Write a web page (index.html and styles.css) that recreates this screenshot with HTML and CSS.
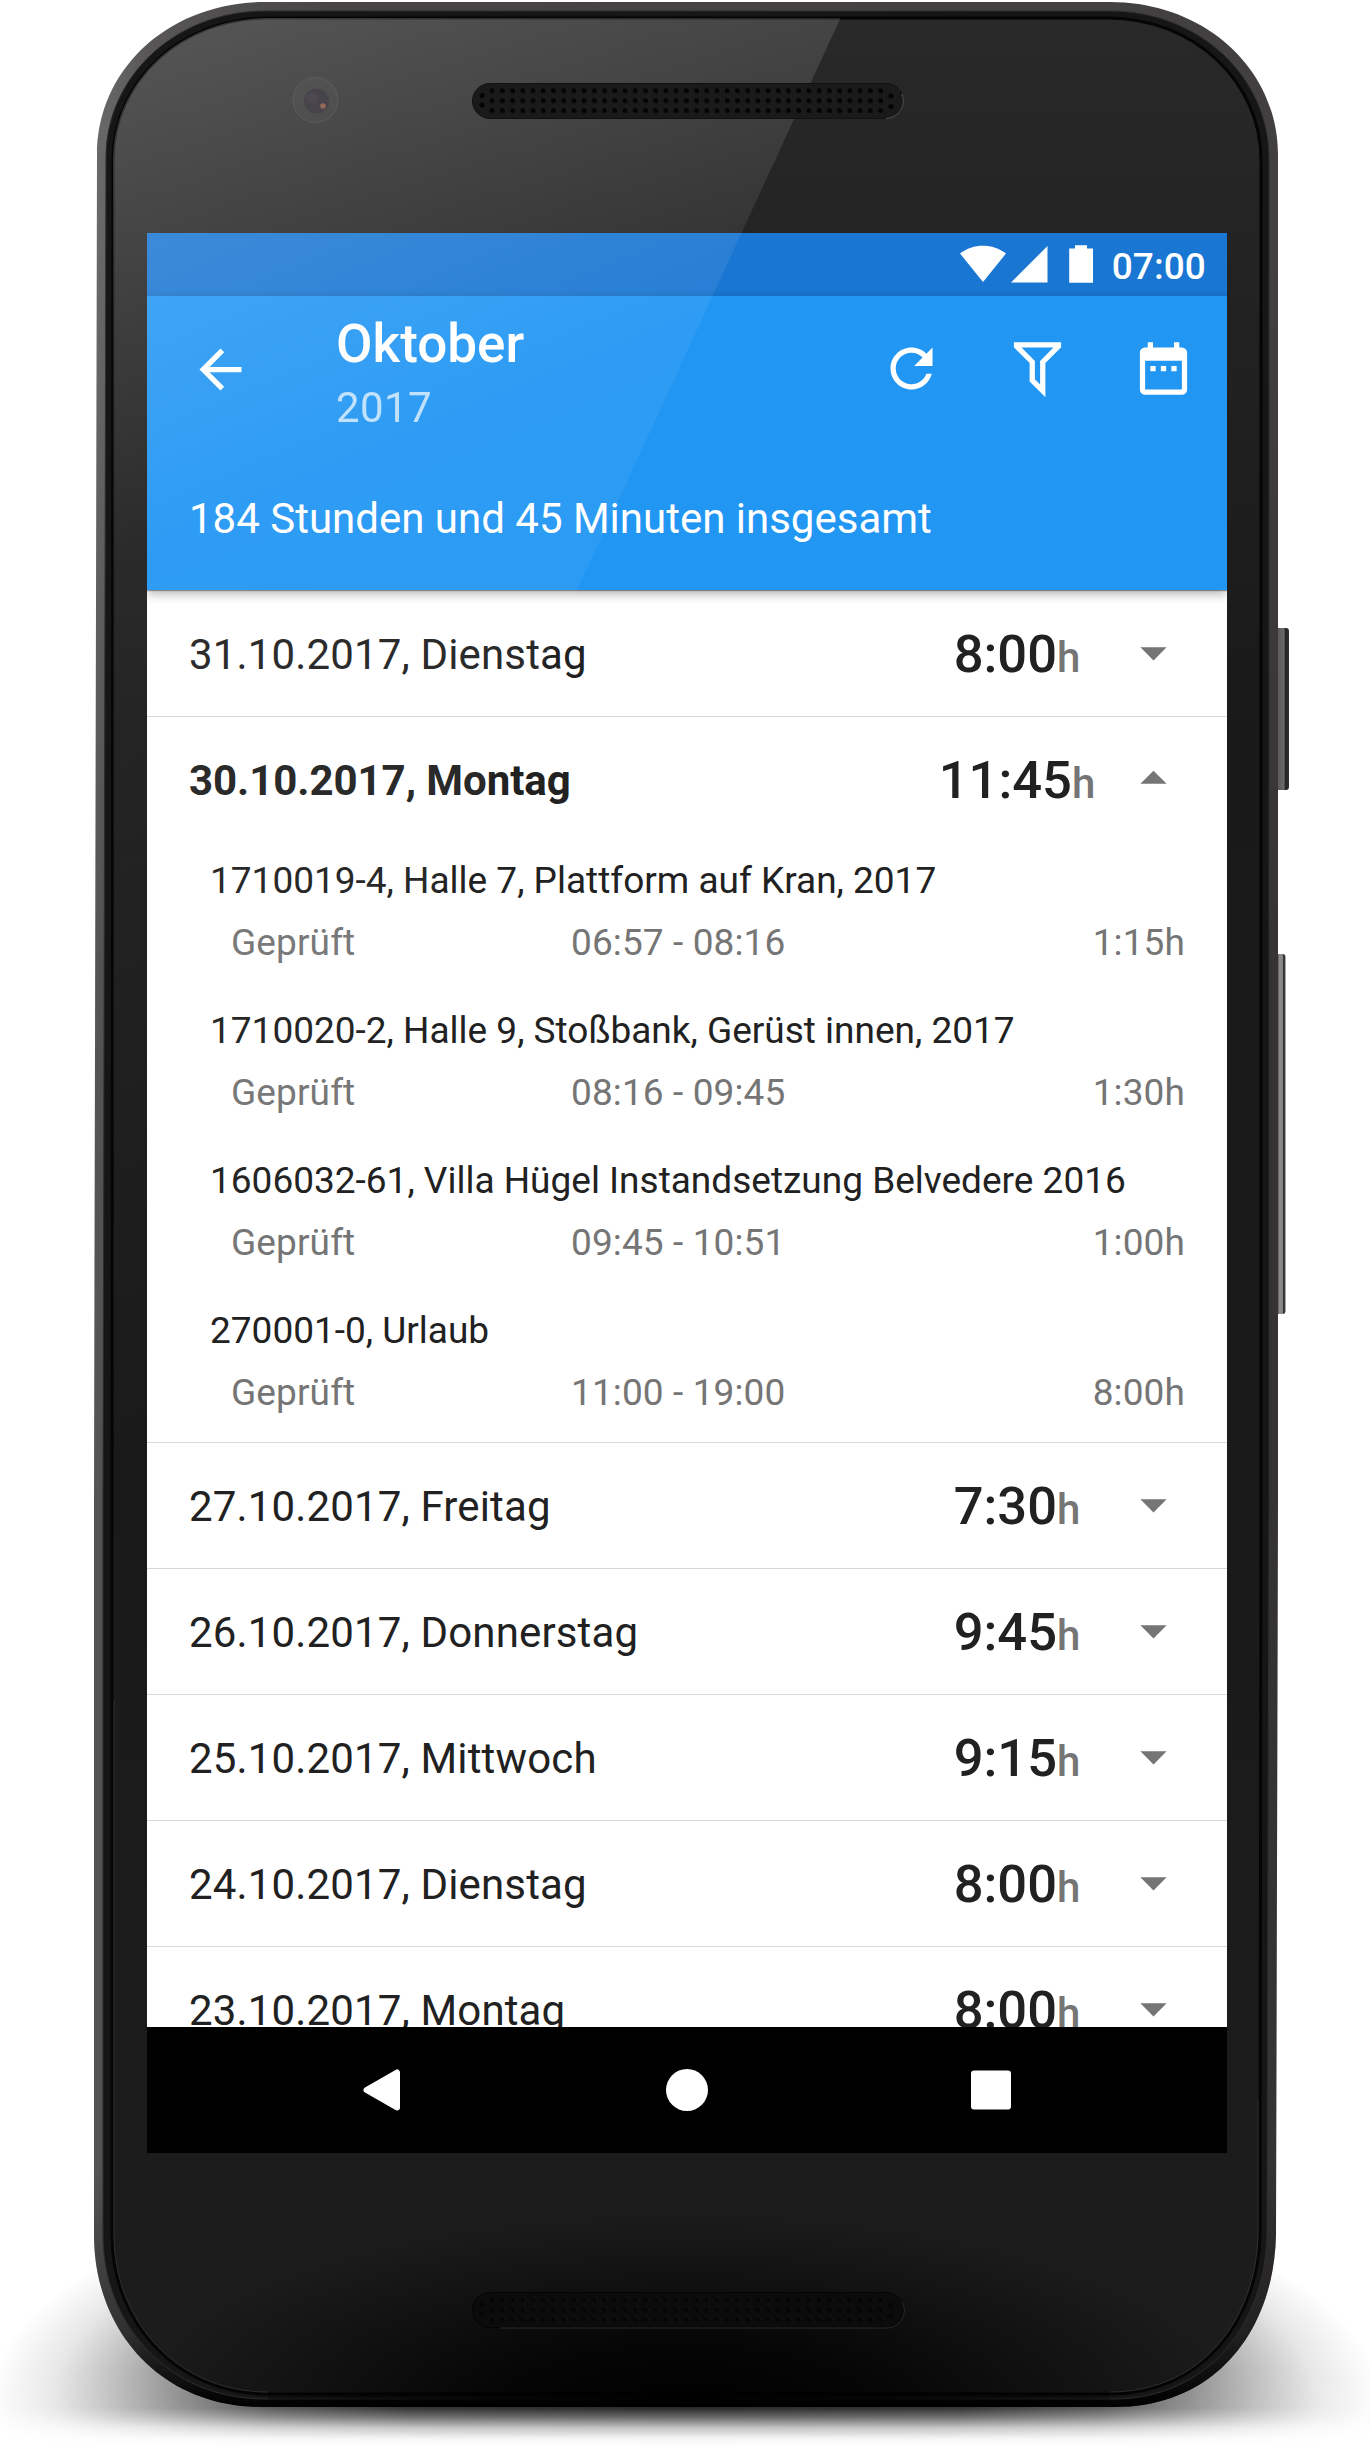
FILE: index.html
```html
<!DOCTYPE html>
<html lang="de">
<head>
<meta charset="utf-8">
<title>Oktober 2017</title>
<link rel="stylesheet" href="styles.css">
</head>
<body>
<div class="phone">
  <svg class="layer" viewBox="0 0 1370 2446" aria-hidden="true">
    <defs>
      <radialGradient id="floor" gradientUnits="userSpaceOnUse" cx="0" cy="0" r="1" gradientTransform="translate(685 2400) scale(695 250)">
        <stop offset="0" stop-opacity=".9"/><stop offset=".4" stop-opacity=".85"/><stop offset=".6" stop-opacity=".68"/>
        <stop offset=".72" stop-opacity=".46"/><stop offset=".82" stop-opacity=".26"/><stop offset=".91" stop-opacity=".09"/><stop offset="1" stop-opacity="0"/>
      </radialGradient>
      <linearGradient id="fade" gradientUnits="userSpaceOnUse" x1="0" y1="2370" x2="0" y2="2446">
        <stop offset="0" stop-color="#fff"/><stop offset=".5" stop-color="#eee"/><stop offset=".62" stop-color="#aaa"/><stop offset=".76" stop-color="#444"/><stop offset=".9" stop-color="#0c0c0c"/><stop offset="1" stop-color="#000"/>
      </linearGradient>
      <mask id="floorMask" maskUnits="userSpaceOnUse" x="0" y="2100" width="1370" height="346"><rect y="2100" width="1370" height="346" fill="url(#fade)"/></mask>
      <linearGradient id="rim" x1="0" y1="0" x2="1" y2="0">
        <stop offset="0" stop-color="#6b6a6b"/><stop offset=".05" stop-color="#575556"/><stop offset=".2" stop-color="#474546"/><stop offset="1" stop-color="#423f40"/>
      </linearGradient>
      <linearGradient id="rimDark" x1="0" y1="0" x2="0" y2="1">
        <stop offset=".1" stop-opacity="0"/><stop offset=".4" stop-opacity=".2"/><stop offset=".9" stop-opacity=".2"/><stop offset=".97" stop-opacity=".5"/><stop offset="1" stop-opacity="1"/>
      </linearGradient>
      <linearGradient id="glass" x1="0" y1="0" x2="0" y2="1">
        <stop offset="0" stop-color="#292929"/><stop offset=".12" stop-color="#222"/><stop offset=".3" stop-color="#191919"/><stop offset=".6" stop-color="#1a1a1a"/><stop offset="1" stop-color="#1c1c1d"/>
      </linearGradient>
      <radialGradient id="glassDark" gradientUnits="userSpaceOnUse" cx="0" cy="0" r="1" gradientTransform="translate(685 2415) scale(570 205)">
        <stop offset="0" stop-opacity="1"/><stop offset=".35" stop-opacity=".8"/><stop offset=".7" stop-opacity=".35"/><stop offset="1" stop-opacity="0"/>
      </radialGradient>
      <linearGradient id="key" x1="0" y1="0" x2="1" y2="0">
        <stop offset="0" stop-color="#4b494b"/><stop offset=".7" stop-color="#6b696b"/><stop offset=".8" stop-color="#222"/><stop offset="1" stop-color="#333"/>
      </linearGradient>
      <linearGradient id="rocker" x1="0" y1="0" x2="1" y2="0">
        <stop offset=".5" stop-color="#555"/><stop offset=".62" stop-color="#8e8c8d"/><stop offset=".82" stop-color="#858384"/><stop offset=".88" stop-color="#222"/><stop offset="1" stop-color="#555"/>
      </linearGradient>
    </defs>
    <rect y="2100" width="1370" height="346" fill="url(#floor)" mask="url(#floorMask)"/>
    <rect x="1272" y="628" width="17" height="162" rx="3" fill="url(#key)"/>
    <rect x="1270" y="954" width="15.500" height="360" rx="3" fill="url(#rocker)"/>
    <path id="body" fill="url(#rim)" d="M97 155C97 68 170 2 265 2H1110C1204 2 1278 68 1278 155V1500L1276 2235C1274 2330 1216 2407 1115 2407H262C160 2407 94 2330 94 2235V1500Z"/>
    <path fill="url(#rimDark)" d="M97 155C97 68 170 2 265 2H1110C1204 2 1278 68 1278 155V1500L1276 2235C1274 2330 1216 2407 1115 2407H262C160 2407 94 2330 94 2235V1500Z"/>
    <path fill="#161616" stroke="#2e2d2d" stroke-width="1" d="M106 158C106 76 176 11 265 11H1110C1198 11 1269 76 1269 158V1500L1267 2235C1265 2324 1208 2399 1113 2399H265C168 2399 103 2324 103 2235V1500Z"/>
    <path fill="url(#glass)" stroke="#050505" stroke-width="3" d="M113 160C113 82 180 18 268 18H1108C1194 18 1261 82 1261 160V1500L1260 2235C1258 2320 1203 2394 1110 2394H268C174 2394 112 2320 112 2235V1500Z"/>
    <path fill="url(#glassDark)" d="M113 2000H1261L1260 2235C1258 2320 1203 2394 1110 2394V2407H268V2394C174 2394 112 2320 112 2235Z"/>
    <path fill="none" stroke="#3c3c3c" stroke-opacity=".6" d="M114 1700V2235C114 2320 176 2392 268 2392M1258 2100V2235C1256 2318 1202 2392 1110 2392"/>
  </svg>

  <main class="screen">
    <div class="statusbar">
      <svg class="signals" viewBox="0 0 134 38" aria-hidden="true"><path d="M0 8.500C13-2 33-2 46 8.500L23 37ZM51 37.500 87.500 1V37.500ZM109.200 3.500H115V.3H127V3.500H133V37.700H109.200Z"/></svg>
      <span class="clock">07:00</span>
    </div>
    <header class="appbar">
      <div class="toolbar">
        <svg class="icon back" viewBox="0 0 24 24"><path d="M20 11H7.830l5.590-5.590L12 4l-8 8 8 8 1.410-1.410L7.830 13H20v-2z"/></svg>
        <div class="titles"><h1>Oktober</h1><p>2017</p></div>
        <div class="actions">
          <svg class="icon" viewBox="0 0 24 24"><path d="M17.650 6.350C16.200 4.900 14.210 4 12 4c-4.420 0-7.990 3.580-7.990 8s3.570 8 7.990 8c3.730 0 6.840-2.550 7.730-6h-2.080c-.82 2.330-3.040 4-5.650 4-3.310 0-6-2.690-6-6s2.690-6 6-6c1.660 0 3.140.69 4.220 1.780L13 11h7V4l-2.350 2.350z"/></svg>
          <svg class="icon" viewBox="0 0 24 24"><path fill-rule="evenodd" d="M3 2H21V4H20.920L15 9.920V22.910L9 16.910V9.910L3.090 4H3ZM11 16.080L13 18.080V9H13.090L18.090 4H5.920L10.920 9H11Z"/></svg>
          <svg class="icon" viewBox="0 0 24 24"><path d="M9 11H7v2h2v-2m4 0h-2v2h2v-2m4 0h-2v2h2v-2m2-7h-1V2h-2v2H8V2H6v2H5C3.890 4 3 4.900 3 6v14a2 2 0 0 0 2 2h14a2 2 0 0 0 2-2V6a2 2 0 0 0-2-2m0 16H5V9h14v11z"/></svg>
        </div>
      </div>
      <p class="summary">184 Stunden und 45 Minuten insgesamt</p>
    </header>

    <section class="days">
      <article class="day"><div class="row"><span class="date">31.10.2017, Dienstag</span><span class="hours">8:00<small>h</small></span><svg class="icon" viewBox="0 0 24 24"><path d="M7 10l5 5 5-5z"/></svg></div></article>
      <article class="day open">
        <div class="row"><span class="date">30.10.2017, Montag</span><span class="hours">11:45<small>h</small></span><svg class="icon" viewBox="0 0 24 24"><path d="M7 14l5-5 5 5z"/></svg></div>
        <div class="entry"><p class="project">1710019-4, Halle 7, Plattform auf Kran, 2017</p><p class="detail"><span>Geprüft</span><span>06:57 - 08:16</span><span>1:15h</span></p></div>
        <div class="entry"><p class="project">1710020-2, Halle 9, Stoßbank, Gerüst innen, 2017</p><p class="detail"><span>Geprüft</span><span>08:16 - 09:45</span><span>1:30h</span></p></div>
        <div class="entry"><p class="project">1606032-61, Villa Hügel Instandsetzung Belvedere 2016</p><p class="detail"><span>Geprüft</span><span>09:45 - 10:51</span><span>1:00h</span></p></div>
        <div class="entry"><p class="project">270001-0, Urlaub</p><p class="detail"><span>Geprüft</span><span>11:00 - 19:00</span><span>8:00h</span></p></div>
      </article>
      <article class="day"><div class="row"><span class="date">27.10.2017, Freitag</span><span class="hours">7:30<small>h</small></span><svg class="icon" viewBox="0 0 24 24"><path d="M7 10l5 5 5-5z"/></svg></div></article>
      <article class="day"><div class="row"><span class="date">26.10.2017, Donnerstag</span><span class="hours">9:45<small>h</small></span><svg class="icon" viewBox="0 0 24 24"><path d="M7 10l5 5 5-5z"/></svg></div></article>
      <article class="day"><div class="row"><span class="date">25.10.2017, Mittwoch</span><span class="hours">9:15<small>h</small></span><svg class="icon" viewBox="0 0 24 24"><path d="M7 10l5 5 5-5z"/></svg></div></article>
      <article class="day"><div class="row"><span class="date">24.10.2017, Dienstag</span><span class="hours">8:00<small>h</small></span><svg class="icon" viewBox="0 0 24 24"><path d="M7 10l5 5 5-5z"/></svg></div></article>
      <article class="day"><div class="row"><span class="date">23.10.2017, Montag</span><span class="hours">8:00<small>h</small></span><svg class="icon" viewBox="0 0 24 24"><path d="M7 10l5 5 5-5z"/></svg></div></article>
    </section>

    <nav class="navbar">
      <svg viewBox="0 0 44 44"><path stroke="#fff" stroke-width="6" stroke-linejoin="round" d="M5.500 22 36 4.500V39.500Z"/></svg>
      <svg viewBox="0 0 44 44"><circle cx="22" cy="22" r="21"/></svg>
      <svg viewBox="0 0 44 44"><rect x="2" y="2.500" width="40" height="39" rx="3"/></svg>
    </nav>
  </main>

  <svg class="layer" viewBox="0 0 1370 2446" aria-hidden="true">
    <defs>
      <linearGradient id="gloss" gradientUnits="userSpaceOnUse" x1="0" y1="0" x2="538" y2="1292">
        <stop offset="0" stop-color="#fff" stop-opacity=".235"/><stop offset=".4" stop-color="#fff" stop-opacity=".06"/><stop offset="1" stop-color="#fff" stop-opacity="0"/>
      </linearGradient>
      <pattern id="holes" patternUnits="userSpaceOnUse" x="487.200" y="85.500" width="10.220" height="9.900">
        <circle cx="5.600" cy="4.700" r="2.300" fill="#3a3a3a"/><circle cx="5.100" cy="5.100" r="2.600" fill="#050505"/>
      </pattern>
      <g id="grille">
        <rect x="487.200" y="85.500" width="398.600" height="29.700" fill="url(#holes)"/>
        <g fill="#050505"><circle cx="482" cy="95.500" r="2.600"/><circle cx="482" cy="105" r="2.600"/><circle cx="891" cy="96" r="2.600"/><circle cx="891" cy="106.500" r="2.600"/></g>
      </g>
    </defs>
    <path fill="url(#gloss)" d="M840.500 18H268C180 18 113 82 113 160V1598Z"/>
    <circle cx="315.500" cy="100" r="22.500" fill="#fff" fill-opacity=".03" stroke="#777" stroke-opacity=".35"/>
    <circle cx="316.500" cy="101" r="12.500" fill="#46434a"/><circle cx="312" cy="98" r="6" fill="#4b4850"/><circle cx="323" cy="106" r="2.800" fill="#96685a"/>
    <rect x="472.500" y="83.500" width="431" height="35" rx="17.500" fill="#1a1a1a" stroke="#111"/>
    <path d="M886 118.500A17.500 17.500 0 0 0 902 94" fill="none" stroke="#50565a"/>
    <use href="#grille"/>
    <rect x="472.500" y="2292.500" width="431" height="35" rx="17.500" fill="#0b0b0b" stroke="#040404"/>
    <path d="M500 2328H886A17.500 17.500 0 0 0 902 2302" fill="none" stroke="#2a2a2a"/>
    <g transform="translate(0 2209)" opacity=".8"><use href="#grille"/></g>
  </svg>
</div>
</body>
</html>
```
FILE: styles.css
```css
* { box-sizing: border-box; margin: 0; padding: 0; }

body {
  width: 1370px;
  background: #fff;
  font-family: Roboto, "Liberation Sans", sans-serif;
  color: #212121;
}

.phone {
  position: relative;
  width: 1370px;
  height: 2446px;
  padding: 233px 143px 293px 147px;
  overflow: hidden;
}

.layer {
  position: absolute;
  inset: 0;
  width: 1370px;
  height: 2446px;
  pointer-events: none;
}

.screen {
  position: relative;
  isolation: isolate;
  display: flex;
  flex-direction: column;
  height: 1920px;
  background: #fff;
  overflow: hidden;
}

.icon { flex: none; width: 63px; height: 63px; fill: currentColor; }

.statusbar {
  display: flex;
  flex: none;
  justify-content: flex-end;
  height: 63px;
  padding: 12px 21px 0 0;
  gap: 18px;
  background: #1976d2;
  color: #fff;
}
.signals { width: 134px; height: 38px; fill: #fff; }
.clock { font-size: 37px; font-weight: 500; line-height: 43px; letter-spacing: .1px; }

.appbar {
  z-index: 1;
  flex: none;
  height: 294px;
  background: #2196f3;
  color: #fff;
  box-shadow: 0 1px 1px rgba(0, 0, 0, .35), 0 4px 10px rgba(0, 0, 0, .3);
}
.toolbar { display: flex; height: 147px; padding: 0 32px 0 42px; }
.back { margin-top: 42px; }
.titles { flex: 1; padding: 17px 0 0 84px; }
.titles h1 { font-size: 53px; font-weight: 500; line-height: 62px; }
.titles p { margin-top: 8px; font-size: 42px; line-height: 50px; letter-spacing: .4px; opacity: .7; }
.actions { display: flex; gap: 63px; padding-top: 41px; }
.summary { padding: 51px 42px 0; font-size: 42px; line-height: 50px; }

.days { flex: 1; min-height: 0; overflow: hidden; }
.day { border-top: 1px solid #d8d8d8; }
.day:first-child { border-top-color: transparent; }
.row { display: flex; align-items: center; height: 125px; padding: 0 42px; }
.date { flex: 1; padding-top: 2px; font-size: 42px; letter-spacing: .15px; }
.hours { width: 210px; padding: 1px 2px 0 0; font-size: 52.5px; font-weight: 500; text-align: center; }
.hours small { font-size: 42px; color: #757575; }
.row .icon { margin: -2px 0 0 -1px; color: #757575; }
.open .date { font-weight: 700; letter-spacing: -.05px; }

.entry { height: 150px; padding: 17px 42px 0 63px; font-size: 37px; line-height: 43px; }
.detail { display: grid; grid-template-columns: 340px 1fr auto; margin-top: 19px; padding-left: 21px; letter-spacing: .12px; color: #757575; }

.navbar {
  display: flex;
  flex: none;
  align-items: center;
  justify-content: center;
  gap: 260px;
  height: 126px;
  background: #000;
}
.navbar svg { width: 44px; height: 44px; fill: #fff; }
```
